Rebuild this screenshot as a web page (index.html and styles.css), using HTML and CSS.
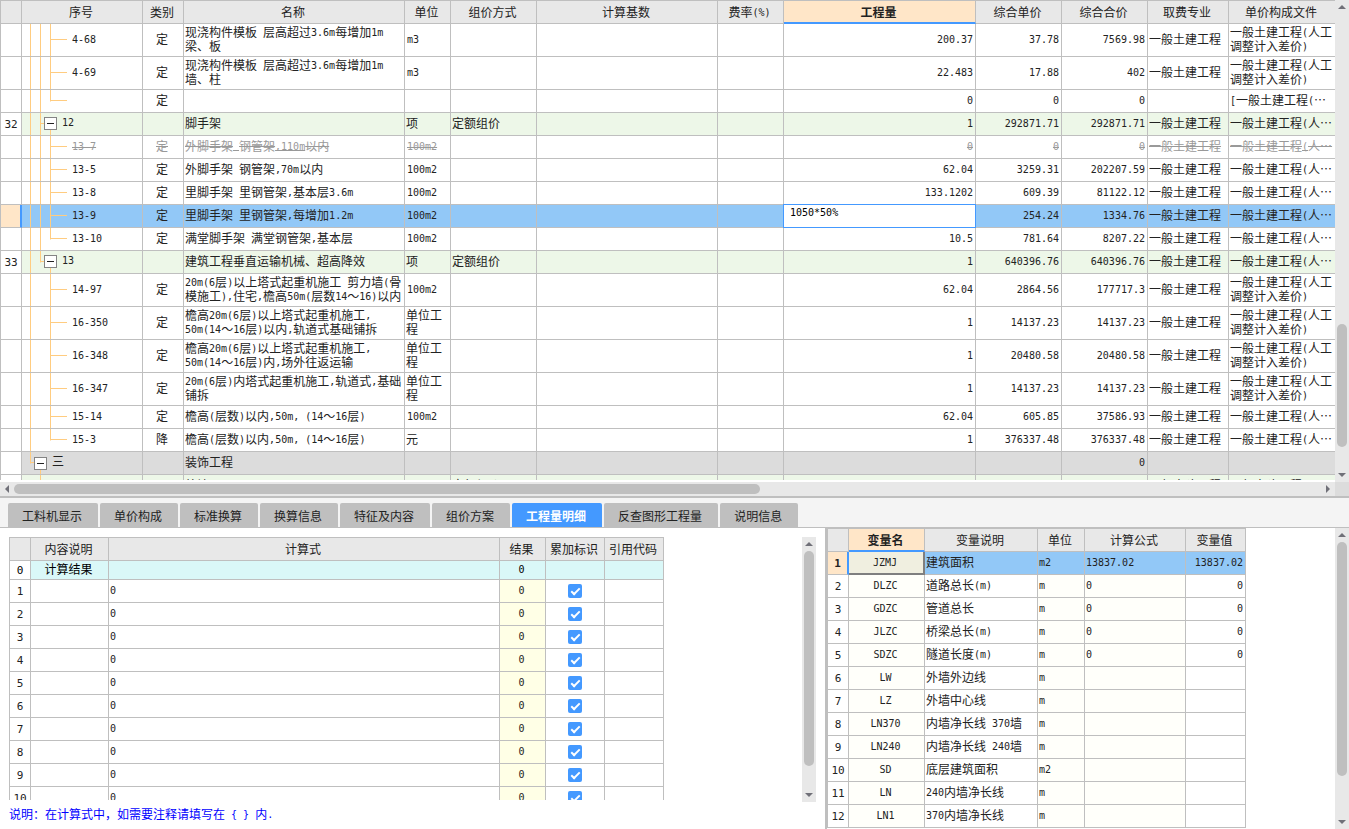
FILE: index.html
```html
<!DOCTYPE html>
<html lang="zh-CN">
<head>
<meta charset="utf-8">
<title>工程量明细</title>
<link rel="stylesheet" href="styles.css">
</head>
<body>
<div class="app">
<section class="estimate">
<div class="grid-view">
<table class="grid bill">
<colgroup><col class="w-21"><col class="w-121"><col class="w-41"><col class="w-221"><col class="w-46"><col class="w-86"><col><col class="w-66"><col class="w-192"><col class="w-86"><col class="w-86"><col class="w-81"><col class="w-106"></colgroup>
<thead>
<tr><th></th><th>序号</th><th>类别</th><th>名称</th><th>单位</th><th>组价方式</th><th>计算基数</th><th>费率<span class="n">(%)</span></th><th class="current">工程量</th><th>综合单价</th><th>综合合价</th><th>取费专业</th><th>单价构成文件</th></tr>
</thead>
<tbody>
<tr class="tall"><td></td><td class="tree">4-68</td><td>定</td><td>现浇构件模板<span class="n"> </span>层高超过<span class="n">3.6m</span>每增加<span class="n">1m</span><br>梁、板</td><td class="n">m3</td><td></td><td></td><td></td><td>200.37</td><td>37.78</td><td>7569.98</td><td>一般土建工程</td><td>一般土建工程<span class="n">(</span>人工<br>调整计入差价<span class="n">)</span></td></tr>
<tr class="tall"><td></td><td class="tree">4-69</td><td>定</td><td>现浇构件模板<span class="n"> </span>层高超过<span class="n">3.6m</span>每增加<span class="n">1m</span><br>墙、柱</td><td class="n">m3</td><td></td><td></td><td></td><td>22.483</td><td>17.88</td><td>402</td><td>一般土建工程</td><td>一般土建工程<span class="n">(</span>人工<br>调整计入差价<span class="n">)</span></td></tr>
<tr><td></td><td class="tree last"></td><td>定</td><td></td><td></td><td></td><td></td><td></td><td>0</td><td>0</td><td>0</td><td></td><td><span class="n">[</span>一般土建工程<span class="n">(</span>…</td></tr>
<tr class="group"><td>32</td><td class="tree branch"><button class="toggle" aria-label="折叠 12"></button>12</td><td></td><td>脚手架</td><td>项</td><td>定额组价</td><td></td><td></td><td>1</td><td>292871.71</td><td>292871.71</td><td>一般土建工程</td><td>一般土建工程<span class="n">(</span>人…</td></tr>
<tr class="void"><td></td><td class="tree">13-7</td><td>定</td><td>外脚手架<span class="n"> </span>钢管架<span class="n">,110m</span>以内</td><td class="n">100m2</td><td></td><td></td><td></td><td>0</td><td>0</td><td>0</td><td>一般土建工程</td><td>一般土建工程<span class="n">(</span>人…</td></tr>
<tr><td></td><td class="tree">13-5</td><td>定</td><td>外脚手架<span class="n"> </span>钢管架<span class="n">,70m</span>以内</td><td class="n">100m2</td><td></td><td></td><td></td><td>62.04</td><td>3259.31</td><td>202207.59</td><td>一般土建工程</td><td>一般土建工程<span class="n">(</span>人…</td></tr>
<tr><td></td><td class="tree">13-8</td><td>定</td><td>里脚手架<span class="n"> </span>里钢管架<span class="n">,</span>基本层<span class="n">3.6m</span></td><td class="n">100m2</td><td></td><td></td><td></td><td>133.1202</td><td>609.39</td><td>81122.12</td><td>一般土建工程</td><td>一般土建工程<span class="n">(</span>人…</td></tr>
<tr class="selected"><td></td><td class="tree">13-9</td><td>定</td><td>里脚手架<span class="n"> </span>里钢管架<span class="n">,</span>每增加<span class="n">1.2m</span></td><td class="n">100m2</td><td></td><td></td><td></td><td class="editing"><input type="text" value="1050*50%" aria-label="工程量"></td><td>254.24</td><td>1334.76</td><td>一般土建工程</td><td>一般土建工程<span class="n">(</span>人…</td></tr>
<tr><td></td><td class="tree last">13-10</td><td>定</td><td>满堂脚手架<span class="n"> </span>满堂钢管架<span class="n">,</span>基本层</td><td class="n">100m2</td><td></td><td></td><td></td><td>10.5</td><td>781.64</td><td>8207.22</td><td>一般土建工程</td><td>一般土建工程<span class="n">(</span>人…</td></tr>
<tr class="group"><td>33</td><td class="tree branch branch-end"><button class="toggle" aria-label="折叠 13"></button>13</td><td></td><td>建筑工程垂直运输机械、超高降效</td><td>项</td><td>定额组价</td><td></td><td></td><td>1</td><td>640396.76</td><td>640396.76</td><td>一般土建工程</td><td>一般土建工程<span class="n">(</span>人…</td></tr>
<tr class="tall"><td></td><td class="tree tail">14-97</td><td>定</td><td><span class="n">20m(6</span>层<span class="n">)</span>以上塔式起重机施工<span class="n"> </span>剪力墙<span class="n">(</span>骨<br>模施工<span class="n">),</span>住宅<span class="n">,</span>檐高<span class="n">50m(</span>层数<span class="n">14</span>～<span class="n">16)</span>以内</td><td class="n">100m2</td><td></td><td></td><td></td><td>62.04</td><td>2864.56</td><td>177717.3</td><td>一般土建工程</td><td>一般土建工程<span class="n">(</span>人工<br>调整计入差价<span class="n">)</span></td></tr>
<tr class="tall"><td></td><td class="tree tail">16-350</td><td>定</td><td>檐高<span class="n">20m(6</span>层<span class="n">)</span>以上塔式起重机施工<span class="n">,</span><br><span class="n">50m(14</span>～<span class="n">16</span>层<span class="n">)</span>以内<span class="n">,</span>轨道式基础铺拆</td><td>单位工<br>程</td><td></td><td></td><td></td><td>1</td><td>14137.23</td><td>14137.23</td><td>一般土建工程</td><td>一般土建工程<span class="n">(</span>人工<br>调整计入差价<span class="n">)</span></td></tr>
<tr class="tall"><td></td><td class="tree tail">16-348</td><td>定</td><td>檐高<span class="n">20m(6</span>层<span class="n">)</span>以上塔式起重机施工<span class="n">,</span><br><span class="n">50m(14</span>～<span class="n">16</span>层<span class="n">)</span>内<span class="n">,</span>场外往返运输</td><td>单位工<br>程</td><td></td><td></td><td></td><td>1</td><td>20480.58</td><td>20480.58</td><td>一般土建工程</td><td>一般土建工程<span class="n">(</span>人工<br>调整计入差价<span class="n">)</span></td></tr>
<tr class="tall"><td></td><td class="tree tail">16-347</td><td>定</td><td><span class="n">20m(6</span>层<span class="n">)</span>内塔式起重机施工<span class="n">,</span>轨道式<span class="n">,</span>基础<br>铺拆</td><td>单位工<br>程</td><td></td><td></td><td></td><td>1</td><td>14137.23</td><td>14137.23</td><td>一般土建工程</td><td>一般土建工程<span class="n">(</span>人工<br>调整计入差价<span class="n">)</span></td></tr>
<tr><td></td><td class="tree tail">15-14</td><td>定</td><td>檐高<span class="n">(</span>层数<span class="n">)</span>以内<span class="n">,50m, (14</span>～<span class="n">16</span>层<span class="n">)</span></td><td class="n">100m2</td><td></td><td></td><td></td><td>62.04</td><td>605.85</td><td>37586.93</td><td>一般土建工程</td><td>一般土建工程<span class="n">(</span>人…</td></tr>
<tr><td></td><td class="tree tail last">15-3</td><td>降</td><td>檐高<span class="n">(</span>层数<span class="n">)</span>以内<span class="n">,50m, (14</span>～<span class="n">16</span>层<span class="n">)</span></td><td>元</td><td></td><td></td><td></td><td>1</td><td>376337.48</td><td>376337.48</td><td>一般土建工程</td><td>一般土建工程<span class="n">(</span>人…</td></tr>
<tr class="chapter"><td></td><td class="tree root"><button class="toggle" aria-label="折叠 三"></button>三</td><td></td><td>装饰工程</td><td></td><td></td><td></td><td></td><td></td><td></td><td>0</td><td></td><td></td></tr>
<tr class="group"><td></td><td class="tree root-child"></td><td></td><td>外墙面</td><td>项</td><td>定额组价</td><td></td><td></td><td></td><td></td><td></td><td>一般土建工程</td><td>一般土建工程</td></tr>
</tbody>
</table>
</div>
<div class="scroll vertical bill-v"><span class="arrow up"></span><span class="before"></span><span class="thumb"></span><span class="after"></span><span class="arrow down"></span></div>
<div class="scroll horizontal"><span class="arrow left"></span><span class="thumb"></span><span class="after"></span><span class="arrow right"></span></div>
<div class="corner"></div>
</section>

<section class="details">
<nav class="tabs" role="tablist">
<button role="tab">工料机显示</button><button role="tab">单价构成</button><button role="tab">标准换算</button><button role="tab">换算信息</button><button role="tab">特征及内容</button><button role="tab">组价方案</button><button role="tab" aria-selected="true">工程量明细</button><button role="tab">反查图形工程量</button><button role="tab">说明信息</button>
</nav>
<div class="panes">
<div class="quantity">
<div class="quantity-body">
<div class="quantity-view">
<table class="grid lines">
<colgroup><col class="w-21"><col class="w-78"><col class="w-391"><col class="w-46"><col class="w-59"><col class="w-59"></colgroup>
<thead><tr><th></th><th>内容说明</th><th>计算式</th><th>结果</th><th>累加标识</th><th>引用代码</th></tr></thead>
<tbody>
<tr class="total"><td>0</td><td>计算结果</td><td></td><td>0</td><td></td><td></td></tr>
<tr><td>1</td><td></td><td>0</td><td>0</td><td><input type="checkbox" checked aria-label="累加 1"></td><td></td></tr>
<tr><td>2</td><td></td><td>0</td><td>0</td><td><input type="checkbox" checked aria-label="累加 2"></td><td></td></tr>
<tr><td>3</td><td></td><td>0</td><td>0</td><td><input type="checkbox" checked aria-label="累加 3"></td><td></td></tr>
<tr><td>4</td><td></td><td>0</td><td>0</td><td><input type="checkbox" checked aria-label="累加 4"></td><td></td></tr>
<tr><td>5</td><td></td><td>0</td><td>0</td><td><input type="checkbox" checked aria-label="累加 5"></td><td></td></tr>
<tr><td>6</td><td></td><td>0</td><td>0</td><td><input type="checkbox" checked aria-label="累加 6"></td><td></td></tr>
<tr><td>7</td><td></td><td>0</td><td>0</td><td><input type="checkbox" checked aria-label="累加 7"></td><td></td></tr>
<tr><td>8</td><td></td><td>0</td><td>0</td><td><input type="checkbox" checked aria-label="累加 8"></td><td></td></tr>
<tr><td>9</td><td></td><td>0</td><td>0</td><td><input type="checkbox" checked aria-label="累加 9"></td><td></td></tr>
<tr><td>10</td><td></td><td>0</td><td>0</td><td><input type="checkbox" checked aria-label="累加 10"></td><td></td></tr>
</tbody>
</table>
</div>
<div class="scroll vertical lines-v"><span class="arrow up"></span><span class="thumb"></span><span class="after"></span><span class="arrow down"></span></div>
</div>
<p class="note">说明：在计算式中，如需要注释请填写在<span class="n"> { } </span>内<span class="n">.</span></p>
</div>
<div class="variables">
<div class="variables-view">
<table class="grid vars">
<colgroup><col class="w-21"><col class="w-76"><col class="w-113"><col class="w-47"><col class="w-101"><col class="w-60"></colgroup>
<thead><tr><th></th><th class="current">变量名</th><th>变量说明</th><th>单位</th><th>计算公式</th><th>变量值</th></tr></thead>
<tbody>
<tr class="selected"><td>1</td><td>JZMJ</td><td>建筑面积</td><td>m2</td><td>13837.02</td><td>13837.02</td></tr>
<tr><td>2</td><td>DLZC</td><td>道路总长<span class="n">(m)</span></td><td>m</td><td>0</td><td>0</td></tr>
<tr><td>3</td><td>GDZC</td><td>管道总长</td><td>m</td><td>0</td><td>0</td></tr>
<tr><td>4</td><td>JLZC</td><td>桥梁总长<span class="n">(m)</span></td><td>m</td><td>0</td><td>0</td></tr>
<tr><td>5</td><td>SDZC</td><td>隧道长度<span class="n">(m)</span></td><td>m</td><td>0</td><td>0</td></tr>
<tr><td>6</td><td>LW</td><td>外墙外边线</td><td>m</td><td></td><td></td></tr>
<tr><td>7</td><td>LZ</td><td>外墙中心线</td><td>m</td><td></td><td></td></tr>
<tr><td>8</td><td>LN370</td><td>内墙净长线<span class="n"> 370</span>墙</td><td>m</td><td></td><td></td></tr>
<tr><td>9</td><td>LN240</td><td>内墙净长线<span class="n"> 240</span>墙</td><td>m</td><td></td><td></td></tr>
<tr><td>10</td><td>SD</td><td>底层建筑面积</td><td>m2</td><td></td><td></td></tr>
<tr><td>11</td><td>LN</td><td><span class="n">240</span>内墙净长线</td><td>m</td><td></td><td></td></tr>
<tr><td>12</td><td>LN1</td><td><span class="n">370</span>内墙净长线</td><td>m</td><td></td><td></td></tr>
</tbody>
</table>
</div>
<div class="scroll vertical vars-v"><span class="arrow up"></span><span class="thumb"></span><span class="after"></span><span class="arrow down"></span></div>
</div>
</div>
</section>
</div>
</body>
</html>
```

FILE: styles.css
```css
:root {
  --line: #bfbfbf;
  --head: #e8e8e8;
  --blue: #4499ff;
  --peach: #ffe6c8;
  --pick: #92c8f7;
  --guide: #ffcc80;
  --cjk: "Noto Sans CJK SC", sans-serif;
  --mono: "DejaVu Sans Mono", "Noto Sans CJK SC", monospace;
}

*, ::before, ::after { box-sizing: border-box; }

body {
  margin: 0;
  background: #fff;
  color: #222;
  font: 12px/14px var(--cjk);
}

.app {
  display: grid;
  grid-template-rows: minmax(0, 1fr) 331px;
  height: 100vh;
  overflow: hidden;
}

/* Latin runs at half the width of a Chinese character */
.n { font: 10px/10px var(--mono); white-space: pre; }
span.n { vertical-align: 1px; }

/* Grids */
.grid {
  border-collapse: separate;
  border-spacing: 0;
  border-top: 1px solid var(--line);
  border-left: 1px solid var(--line);
  table-layout: fixed;
}
.grid th, .grid td {
  height: 23px;
  padding: 0 0 2px 1px;
  border-right: 1px solid var(--line);
  border-bottom: 1px solid var(--line);
  overflow: hidden;
  white-space: nowrap;
  text-align: left;
  font-weight: normal;
}
.grid td.n { padding: 0 0 0 2px; }
.grid th { padding: 0 2px 0 0; background: var(--head); text-align: center; }
.grid th.current {
  border-bottom: 2px solid var(--blue);
  background: var(--peach);
  font-weight: bold;
}
.grid td:first-child {
  padding: 1px 0 0;
  text-align: center;
  font: 11px/14px var(--mono);
}
.w-21 { width: 21px; } .w-41 { width: 41px; } .w-46 { width: 46px; }
.w-47 { width: 47px; } .w-59 { width: 59px; } .w-60 { width: 60px; }
.w-66 { width: 66px; } .w-76 { width: 76px; } .w-78 { width: 78px; }
.w-81 { width: 81px; } .w-86 { width: 86px; } .w-101 { width: 101px; }
.w-106 { width: 106px; } .w-113 { width: 113px; } .w-121 { width: 121px; }
.w-192 { width: 192px; } .w-221 { width: 221px; } .w-391 { width: 391px; }

/* Bill of quantities */
.estimate {
  display: grid;
  grid-template: minmax(0, 1fr) 14px / minmax(0, 1fr) 14px;
  border-bottom: 2px solid var(--line);
  min-height: 0;
}
.grid-view { overflow: hidden; margin-bottom: 2px; }
.bill { width: 100%; }
.bill th:last-child, .bill td:last-child { border-right: 0; }
.bill .tall td { height: 33px; }
.bill td:nth-child(3) { padding: 0 2px 2px 0; text-align: center; }
.bill td:nth-child(n+9):nth-child(-n+11) {
  padding: 0 2px;
  text-align: right;
  font: 10px/14px var(--mono);
}
.bill .group td:nth-child(n+2) { background-color: #edf7e8; }
.bill .chapter td:nth-child(n+2) { background-color: #dcdcdc; }
.bill .selected td:nth-child(n+2) { background-color: var(--pick); }
.bill .selected td:first-child {
  border-right: 2px solid var(--blue);
  background: var(--peach);
}
.bill .void { color: #999; text-decoration: line-through; }

/* Tree guides: three vertical lines and one horizontal stub */
.bill .tree {
  --h1: 100%; --h2: 100%; --h3: 100%;
  --y3: 0; --stub-x: 28px; --stub-w: 17px;
  padding: 0 0 0 50px;
  font: 10px/14px var(--mono);
  background-image:
    linear-gradient(var(--guide), var(--guide)),
    linear-gradient(var(--guide), var(--guide)),
    linear-gradient(var(--guide), var(--guide)),
    linear-gradient(var(--guide), var(--guide));
  background-origin: border-box;
  background-repeat: no-repeat;
  background-position: 8px 0, 18px var(--y2, 0), 28px var(--y3), var(--stub-x) calc(50% - 1px);
  background-size: 1px var(--h1), 1px var(--h2), 1px var(--h3), var(--stub-w) 1px;
}
.bill .tree.last { --h3: 50%; }
.bill .tree.tail { --h2: 0; }
.bill .tree.branch { --h3: 50%; --y3: 100%; --stub-x: 18px; --stub-w: 4px; padding: 0 0 2px 22px; }
.bill .tree.branch-end { --h2: 50%; }
.bill .tree.root {
  --h1: 50%; --h2: 50%; --y2: 100%; --h3: 0; --stub-x: 8px; --stub-w: 4px;
  padding: 0 0 2px 12px;
  font: 12px/14px var(--cjk);
}
.bill .tree.root-child { --h1: 0; --h3: 0; --stub-w: 0; }
.toggle {
  display: inline-flex;
  align-items: center;
  justify-content: center;
  width: 13px;
  height: 13px;
  margin: 0 5px 0 0;
  padding: 0;
  border: 1px solid #848484;
  background: #fff;
  vertical-align: middle;
}
.toggle::before { content: ""; width: 7px; height: 1px; background: #222; }

.bill td.editing { position: relative; z-index: 1; overflow: visible; }
.editing input {
  position: absolute;
  inset: -1px;
  width: calc(100% + 2px);
  height: calc(100% + 2px);
  padding: 0 6px 8px;
  border: 1px solid var(--blue);
  border-radius: 0;
  outline: 0;
  background: #fff;
  color: #000;
  font: 10px/14px var(--mono);
}

/* Scroll bars */
.scroll { display: flex; background: #e8e8e8; }
.vertical { flex-direction: column; width: 14px; padding: 0 2px; }
.horizontal { padding: 2px 0; }
.thumb { border-radius: 5px; background: var(--line); }
.arrow { display: flex; flex: 0 0 14px; align-items: center; justify-content: center; }
.arrow::before { content: ""; border: 4px solid transparent; }
.up::before { border-top: 0; border-bottom-color: #707078; }
.down::before { border-bottom: 0; border-top-color: #707078; }
.left::before { border-left: 0; border-right-color: #707078; }
.right::before { border-right: 0; border-left-color: #707078; }
.bill-v .before { flex: 310; }
.bill-v .thumb { flex: 123; }
.bill-v .after { flex: 21; }
.horizontal .thumb { flex: 746; }
.horizontal .after { flex: 561; }
.lines-v .thumb { flex: 215; }
.lines-v .after { flex: 22; }
.vars-v .thumb { flex: 234; }
.vars-v .after { flex: 39; }
.corner { background: #dcdcdc; }

/* Detail tabs */
.details { display: flex; flex-direction: column; min-height: 0; }
.tabs {
  display: flex;
  gap: 2px;
  padding: 5px 8px 0;
  border-bottom: 1px solid var(--line);
  background: #f4f4f4;
}
.tabs button {
  height: 24px;
  padding: 2px 16px 0 14px;
  border: 0;
  border-radius: 2px 2px 0 0;
  background: var(--line);
  color: #222;
  font: 12px/14px var(--cjk);
}
.tabs [aria-selected="true"] { background: var(--blue); color: #fff; font-weight: bold; }

.panes {
  display: grid;
  grid-template-columns: minmax(0, 1fr) 524px;
  flex: 1;
  min-height: 0;
}

/* Quantity lines */
.quantity { display: flex; flex-direction: column; min-height: 0; padding: 9px 9px 0; }
.quantity-body { display: flex; flex: 1; justify-content: space-between; min-height: 0; }
.quantity-view { overflow: hidden; margin-bottom: 2px; }
.lines { width: 655px; }
.lines td:nth-child(2) { padding: 0 2px 2px 0; text-align: center; }
.lines td:nth-child(3), .lines td:nth-child(4) { padding: 0 1px; font: 10px/14px var(--mono); }
.lines td:nth-child(4) { padding: 0 2px 0 0; background: #ffffe6; text-align: center; }
.lines td:nth-child(5) { padding: 0; }
.lines .total td { height: 19px; color: #000; }
.lines .total td:nth-child(n+2) { background: #daf8f8; }
.lines input {
  display: block;
  position: relative;
  width: 14px;
  height: 14px;
  margin: 0 auto;
  border-radius: 2px;
  appearance: none;
  background: var(--blue);
}
.lines input:checked::after {
  content: "";
  position: absolute;
  left: 5px;
  top: 2px;
  width: 5px;
  height: 9px;
  border: solid #fff;
  border-width: 0 2px 2px 0;
  transform: rotate(45deg);
}
.note { flex: 0 0 27px; margin: 0; color: #00f; line-height: 24px; }

/* Variables */
.variables {
  display: flex;
  justify-content: space-between;
  min-height: 0;
  border-left: 2px solid var(--line);
}
.variables-view { overflow: hidden; }
.vars { width: 419px; }
.vars td:nth-child(2), .vars td:nth-child(n+4) { padding: 0 1px; font: 10px/14px var(--mono); }
.vars td:nth-child(2) { padding: 0 2px 0 0; text-align: center; }
.vars td:nth-child(2), .vars td:nth-child(4), .vars td:nth-child(5) { background: #fffffa; }
.vars td:nth-child(6) { padding: 0 2px; text-align: right; }
.vars .selected td:nth-child(n+3) { background: var(--pick); }
.vars .selected td:first-child {
  border-right: 2px solid var(--blue);
  background: var(--peach);
  font-weight: bold;
}
.vars .selected td:nth-child(2) {
  border-right: 2px solid #7f7f7f;
  border-bottom: 2px solid #7f7f7f;
  background: #f0efe0;
}
```
